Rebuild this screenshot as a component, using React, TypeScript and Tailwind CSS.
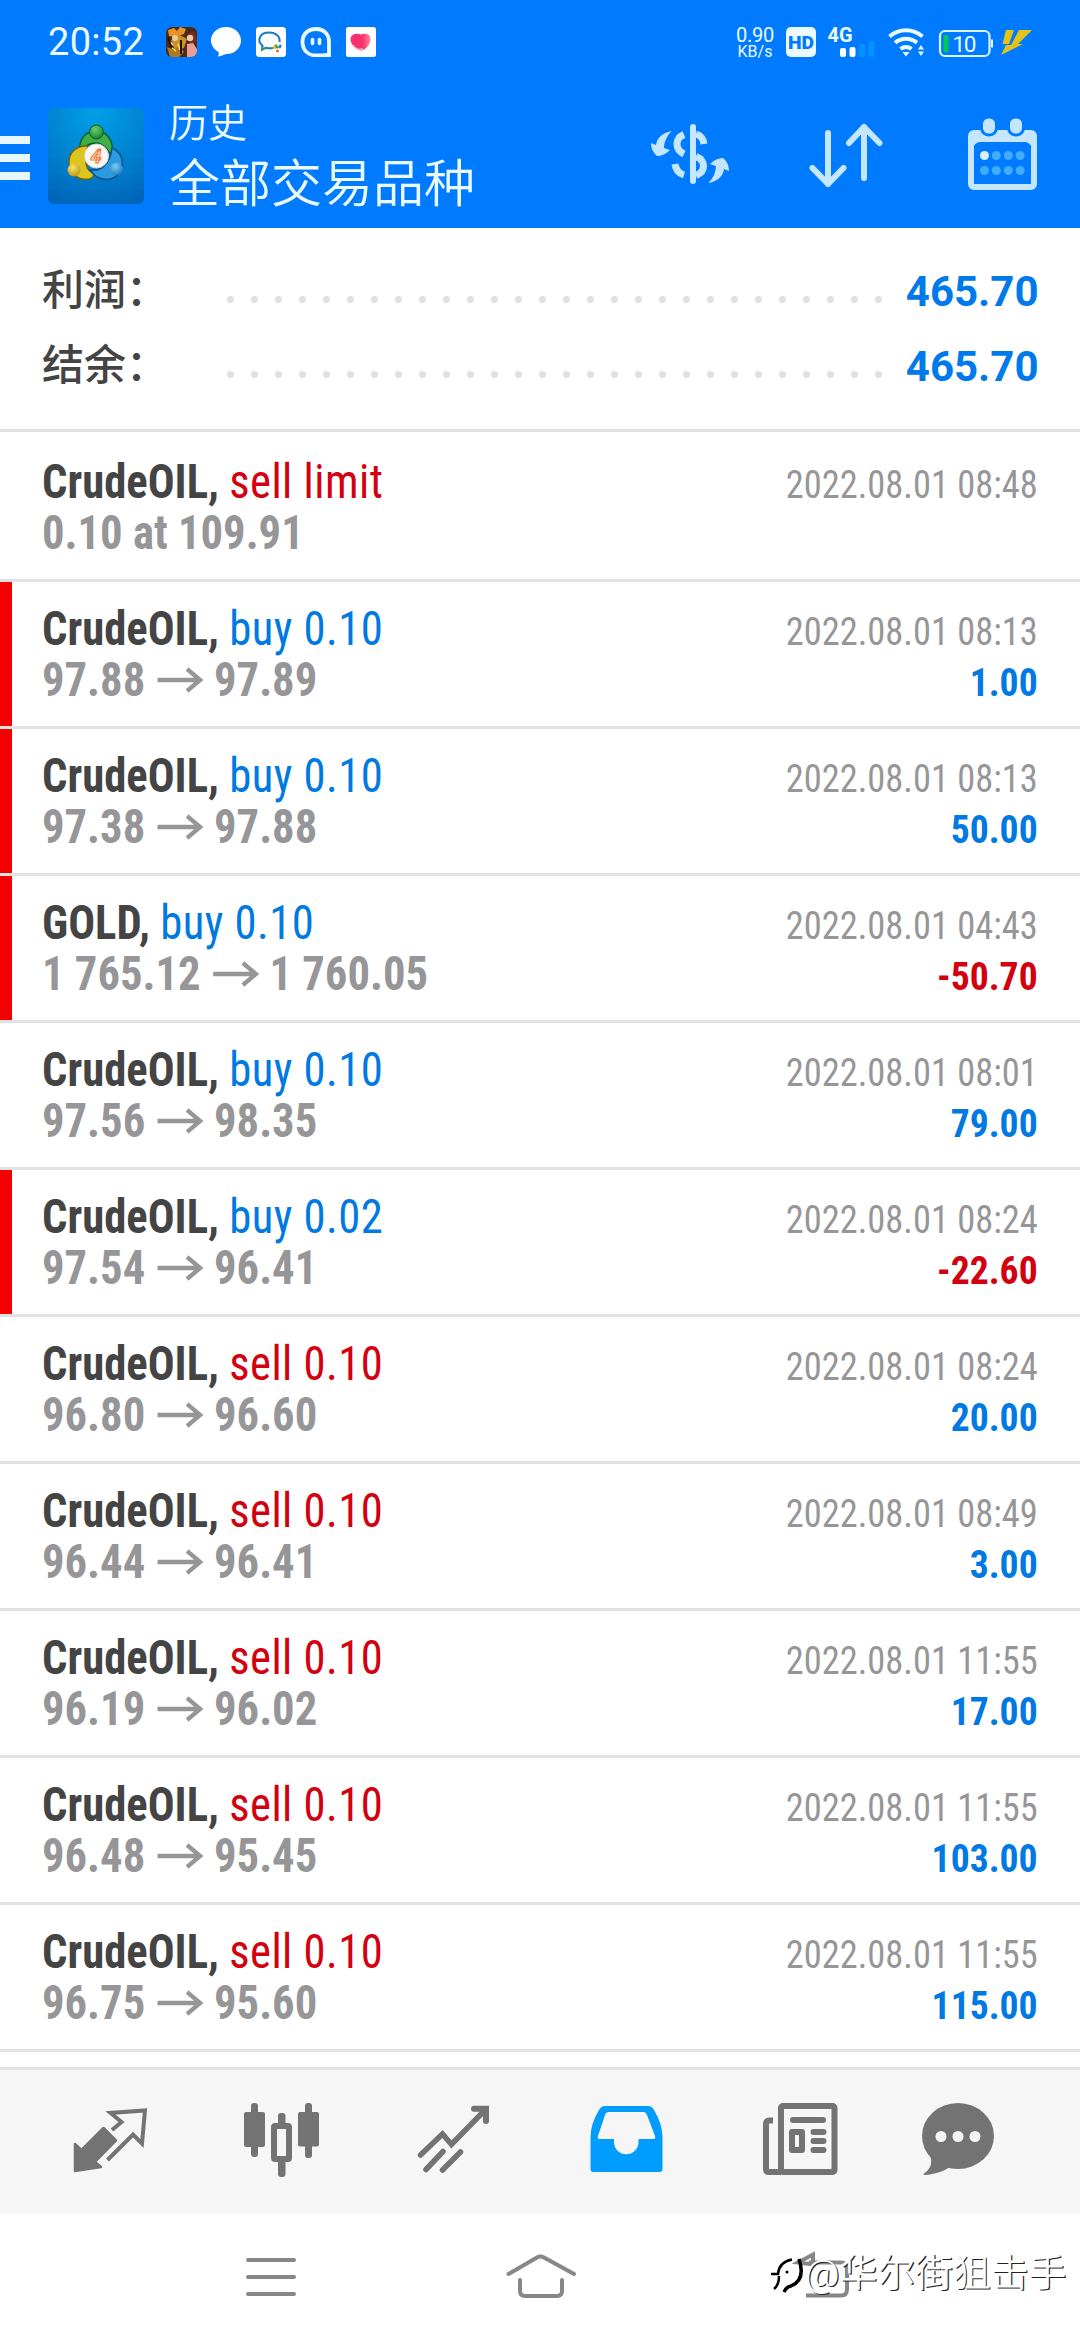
import type { ReactNode } from "react";

type Deal = {
  symbol: string;
  action: string;
  detail: [string, string?];
  time: string;
  profit?: string;
  marked?: boolean;
};

const deals: Deal[] = [
  { symbol: "CrudeOIL", action: "sell limit", detail: ["0.10 at 109.91"], time: "2022.08.01 08:48" },
  { symbol: "CrudeOIL", action: "buy 0.10", detail: ["97.88", "97.89"], time: "2022.08.01 08:13", profit: "1.00", marked: true },
  { symbol: "CrudeOIL", action: "buy 0.10", detail: ["97.38", "97.88"], time: "2022.08.01 08:13", profit: "50.00", marked: true },
  { symbol: "GOLD", action: "buy 0.10", detail: ["1 765.12", "1 760.05"], time: "2022.08.01 04:43", profit: "-50.70", marked: true },
  { symbol: "CrudeOIL", action: "buy 0.10", detail: ["97.56", "98.35"], time: "2022.08.01 08:01", profit: "79.00" },
  { symbol: "CrudeOIL", action: "buy 0.02", detail: ["97.54", "96.41"], time: "2022.08.01 08:24", profit: "-22.60", marked: true },
  { symbol: "CrudeOIL", action: "sell 0.10", detail: ["96.80", "96.60"], time: "2022.08.01 08:24", profit: "20.00" },
  { symbol: "CrudeOIL", action: "sell 0.10", detail: ["96.44", "96.41"], time: "2022.08.01 08:49", profit: "3.00" },
  { symbol: "CrudeOIL", action: "sell 0.10", detail: ["96.19", "96.02"], time: "2022.08.01 11:55", profit: "17.00" },
  { symbol: "CrudeOIL", action: "sell 0.10", detail: ["96.48", "95.45"], time: "2022.08.01 11:55", profit: "103.00" },
  { symbol: "CrudeOIL", action: "sell 0.10", detail: ["96.75", "95.60"], time: "2022.08.01 11:55", profit: "115.00" },
];

export default function App() {
  return (
    <div className="flex h-[2340px] w-[1080px] flex-col overflow-hidden bg-white font-['Roboto','Noto_Sans_CJK_SC',sans-serif]">
      <header className="h-[228px] shrink-0 bg-[#007bff] text-[#eafaff]">
        <StatusBar />
        <TitleBar />
      </header>

      <section className="h-[204px] shrink-0 border-b-3 border-[#e3e3e4] pt-[26px]">
        <SummaryRow label="利润：" value="465.70" />
        <SummaryRow label="结余：" value="465.70" />
      </section>

      <main className="h-[1635px] shrink-0">
        {deals.map((deal, index) => (
          <DealRow key={index} deal={deal} first={index === 0} />
        ))}
      </main>

      <TabBar />
      <SystemNav />
    </div>
  );
}

function StatusBar() {
  return (
    <div className="flex h-[84px] items-center pl-[48px]">
      <span className="w-[118px] text-[38px] leading-[38px] tracking-[0.3px]">20:52</span>
      <svg width="211" height="30" viewBox="166 27 211 30">
        <defs>
          <clipPath id="game"><rect x="166" y="27" width="31" height="30" rx="6" /></clipPath>
          <linearGradient id="heart" x1="0" x2="1">
            <stop offset="0" stopColor="#ff2d6f" />
            <stop offset="0.6" stopColor="#f5346a" />
            <stop offset="1" stopColor="#ff8aa0" />
          </linearGradient>
        </defs>
        <g clipPath="url(#game)">
          <rect x="166" y="27" width="31" height="30" fill="#4a2a17" />
          <path d="M168 30l6-2 3 3 3-4 6 2-2 5-9 3-6-1z" fill="#e8932a" />
          <path d="M171 40l9-5 7 4-3 9-9 3z" fill="#c7912e" />
          <path d="M187 34l7-3 3 10-6 4z" fill="#7a2a20" />
          <circle cx="175" cy="38" r="3" fill="#f0c99a" />
          <circle cx="190" cy="38" r="3.2" fill="#f4c7a8" />
          <path d="M187 44l6-1 4 6v8h-10z" fill="#e99d94" />
          <path d="M167 47l7 3 5-5 5 7-5 5h-9z" fill="#b07a22" />
          <path d="M172 48l4 3M178 44l2 6M170 42l3 3" stroke="#ffe070" strokeWidth="1.500" />
          <path d="M181 40v14M168 37l3 10" stroke="#24120c" strokeWidth="2" />
        </g>
        <path d="M226 27c8.500 0 15 6 15 13.500S234.500 54 227 54c-2 0-4.500 2-9.500 2.500 1.500-1.500 1.500-3 1-4.500-4.500-2.500-7.500-7-7.500-11.500C211 33 217.500 27 226 27z" fill="#fff" />
        <rect x="256" y="27" width="30" height="30" rx="3.500" fill="#fff" />
        <path d="M273 48c-2 .3-5 .3-7-.3l-4 2 .5-4c-6-5-3-13.200 6.500-13.200 7 0 11.500 4 10.500 9.500" fill="none" stroke="#1a78c8" strokeWidth="2" />
        <path d="M262.500 46l-.5 3.700 4-2" fill="none" stroke="#2f9e58" strokeWidth="1.800" />
        <path d="M275 45l3 3" stroke="#3aa755" strokeWidth="2.500" />
        <path d="M281 45l-2 3" stroke="#2d7cd6" strokeWidth="2.500" />
        <path d="M273 47l3 1" stroke="#f4b400" strokeWidth="2.500" />
        <path d="M278 52l-1-2" stroke="#ea4a35" strokeWidth="2.500" />
        <path d="M316 29c8 0 13 5.500 13 12.500V55h-4c-2.500.5-6 .5-9 .5-8 0-13.500-5.500-13.500-13.500S308 29 316 29z" fill="none" stroke="#eafaff" strokeWidth="3.800" />
        <path d="M312.500 39.500v4M319.500 39.500v4" stroke="#eafaff" strokeWidth="3.600" strokeLinecap="round" />
        <rect x="346" y="27" width="30" height="30" rx="2.500" fill="#fff" />
        <path d="M361 34.500c3-1.500 9-1 9.500 3.500.8 5-4.500 12.500-9.500 12.500S350 43.500 350.500 38.500c.5-4.500 6.500-6 10.500-4z" fill="url(#heart)" />
        <path d="M353 45c2 3.500 6 5 10 4" fill="none" stroke="#ffb9c8" strokeWidth="1.500" />
      </svg>

      <div className="ml-[358px] flex w-[40px] flex-col items-center">
        <span className="text-[20px] leading-[18px] tracking-[-0.3px]">0.90</span>
        <span className="text-[16px] leading-[15px]">KB/s</span>
      </div>
      <svg className="ml-[11px]" width="248" height="48" viewBox="786 18 248 48">
        <rect x="786" y="27" width="30" height="30" rx="5" fill="#eafaff" />
        <text x="788" y="49" fontSize="18" fontWeight="900" textLength="26" lengthAdjust="spacingAndGlyphs" fill="#007bff">HD</text>
        <text x="827.500" y="42" fontSize="21" fontWeight="700" textLength="25" lengthAdjust="spacingAndGlyphs" fill="#eafaff">4G</text>
        <rect x="840" y="48" width="6" height="9" rx="2" fill="#fff" />
        <rect x="849.500" y="47" width="6" height="10" rx="2" fill="#fff" />
        <rect x="859" y="44" width="6" height="13" rx="2" fill="#0592ff" />
        <rect x="868.500" y="41" width="6" height="16" rx="2" fill="#0592ff" />
        <g fill="none" stroke="#eafaff" strokeWidth="4">
          <path d="M889.500 36.500a25 25 0 0 1 33 0" />
          <path d="M895 42.800a17 17 0 0 1 22 0" />
          <path d="M900.500 49a9 9 0 0 1 11 0" />
        </g>
        <path d="M902.500 52h7l-3.500 4.500zM918 49.500l3-4.500 3 4.500zM918 51.500h6l-3 4.500z" fill="#eafaff" />
        <rect x="940" y="31" width="49.500" height="25" rx="5" fill="none" stroke="#dff3ff" strokeWidth="2.200" />
        <rect x="991" y="39.500" width="2" height="8" fill="#dff3ff" />
        <rect x="943.500" y="35" width="5" height="17" rx="1" fill="#00c853" />
        <text x="952.500" y="52" fontSize="22.500" textLength="24" fill="#eafaff">10</text>
        <path d="M1006 30h8l-5 14h-6.500zM1019 30h13l-14 14h5l-22 11 5-10h5z" fill="#e3c31a" />
      </svg>
    </div>
  );
}

function TitleBar() {
  return (
    <div className="flex h-[144px]">
      <div className="mt-[52px] flex w-[30px] flex-col gap-[10px]">
        <span className="h-2 bg-[#e6f7ff]" />
        <span className="h-2 bg-[#e6f7ff]" />
        <span className="h-2 bg-[#e6f7ff]" />
      </div>
      <AppLogo />
      <div className="ml-[25px] w-[400px]">
        <p className="mt-[20px] text-[39px] leading-[40px] font-[350]">历史</p>
        <h1 className="mt-[11px] text-[51px] leading-[60px] font-[350]">全部交易品种</h1>
      </div>
      <svg className="ml-[31px]" width="480" height="144" viewBox="600 84 480 144" fill="none" stroke="#c4e6ff">
        <g strokeWidth="7">
          <path d="M693 127v54" strokeWidth="6" strokeLinecap="round" />
          <path d="M684 134.500q-7 3-7 9.500t7 10" />
          <path d="M684 175q-8-2.500-9-11" />
          <path d="M696 134q7 2 8 10" />
          <path d="M696 156.500q7.500 3 7.500 9.500t-7.500 9.500" />
        </g>
        <g fill="#c4e6ff" stroke="none">
          <path id="curl" d="M671.500 131q-14 3-15.500 14l-5-2q0 8 6 13 7 0 13-6l-6-2q0-9 7.500-17z" />
          <use href="#curl" transform="rotate(180 690 157)" />
        </g>
        <g strokeWidth="6" strokeLinecap="round" strokeLinejoin="round">
          <path d="M828 133v51M812.500 168l15.500 16 15.500-16" />
          <path d="M864 178v-51M849 143l15-16 15.500 16" />
        </g>
        <rect x="971" y="133" width="63" height="54" rx="3" strokeWidth="6" />
        <path d="M971 136h63v9h-63z" fill="#c4e6ff" stroke="none" />
        <rect x="974" y="142" width="57" height="42" rx="6" fill="#007bff" stroke="none" />
        <rect x="981.500" y="117" width="15" height="18" rx="7" fill="#c4e6ff" stroke="#007bff" strokeWidth="3" />
        <rect x="1008.500" y="117" width="15" height="18" rx="7" fill="#c4e6ff" stroke="#007bff" strokeWidth="3" />
        <g fill="#40adff" stroke="none">
          <circle cx="984.500" cy="155.500" r="4.500" fill="#d9f1ff" />
          <circle cx="996.300" cy="155.500" r="4.500" />
          <circle cx="1008.300" cy="155.500" r="4.500" />
          <circle cx="1020.200" cy="155.500" r="4.500" />
          <circle cx="984.500" cy="170.500" r="4.500" />
          <circle cx="996.300" cy="170.500" r="4.500" />
          <circle cx="1008.300" cy="170.500" r="4.500" />
          <circle cx="1020.200" cy="170.500" r="4.500" />
        </g>
      </svg>
    </div>
  );
}

function AppLogo() {
  return (
    <svg className="mt-6 ml-[18px]" width="96" height="96" viewBox="0 0 96 96">
      <defs>
        <radialGradient id="tile" cx="0.5" cy="0.05" r="1">
          <stop offset="0" stopColor="#009fe8" />
          <stop offset="0.55" stopColor="#0082d0" />
          <stop offset="1" stopColor="#0064b8" />
        </radialGradient>
        <radialGradient id="green" cx="0.4" cy="0.3" r="0.8"><stop offset="0" stopColor="#6fd06a" /><stop offset="1" stopColor="#0c7a2c" /></radialGradient>
        <radialGradient id="gold" cx="0.4" cy="0.3" r="0.8"><stop offset="0" stopColor="#f7e36a" /><stop offset="1" stopColor="#b98f08" /></radialGradient>
        <radialGradient id="blue" cx="0.4" cy="0.3" r="0.8"><stop offset="0" stopColor="#7ccdf5" /><stop offset="1" stopColor="#0f6fb5" /></radialGradient>
      </defs>
      <rect width="96" height="96" rx="6" fill="url(#tile)" />
      <path d="M16 0v96M32 0v96M48 0v96M64 0v96M80 0v96M0 16h96M0 32h96M0 48h96M0 64h96M0 80h96" stroke="#38a8ea" strokeOpacity="0.08" />
      <path d="M32 44C30 31 38 23 48 23s19 8 16 27c-3-8-9-15-16-15s-10 3-16 9z" fill="#3fae45" stroke="#0b5c2a" strokeWidth="1.500" />
      <path d="M40 38c-13-1-20 8-19 18 1 10 10 17 20 15 4-1 6-4 4-6-7-3-9-9-5-27z" fill="#dcc51e" stroke="#6d6410" strokeWidth="1.500" />
      <path d="M64 40c10 4 12 14 9 22-4 9-14 12-24 7-3-2-5-4-7-7 10 2 20-5 22-22z" fill="#2b9be0" stroke="#0a4f8d" strokeWidth="1.500" />
      <circle cx="48.500" cy="24" r="7" fill="url(#green)" stroke="#0b5c2a" />
      <circle cx="26" cy="62" r="6.500" fill="url(#gold)" />
      <circle cx="68.500" cy="61" r="6.500" fill="url(#blue)" />
      <circle cx="48.500" cy="48" r="12" fill="#fbf7f2" stroke="#d8d2ca" />
      <text x="48" y="55" textAnchor="middle" fontSize="20" fontWeight="700" fontStyle="italic" fill="#ffe3cc" stroke="#ee7a3a" strokeWidth="1">4</text>
    </svg>
  );
}

function SummaryRow({ label, value }: { label: string; value: string }) {
  return (
    <div className="flex h-[75px] items-center pr-[41.5px] pl-[42px] text-[42px] leading-[75px]">
      <span className="-mt-[2px] w-[184.5px] font-medium text-[#444]">{label}</span>
      <span className="mt-[15px] flex gap-[17px]">
        {Array.from({ length: 28 }, (_, i) => (
          <span key={i} className="size-[7px] rounded-full bg-[#e0e0e0]" />
        ))}
      </span>
      <span className="ml-auto font-bold text-[#0079ea]">{value}</span>
    </div>
  );
}

function DealRow({ deal, first }: { deal: Deal; first: boolean }) {
  const actionColor = deal.action.startsWith("buy") ? "text-[#0079e2]" : "text-[#d3000f]";
  const profitColor = deal.profit?.startsWith("-") ? "text-[#d3000f]" : "text-[#0079e2]";
  const [open, close] = deal.detail;

  return (
    <div className="flex flex-col border-b-3 border-[#e3e3e4]">
      {first && <div className="h-[3px]" />}
      <div className={`flex h-[144px] justify-between border-l-12 pr-[42px] pl-[30px] font-['Roboto_Condensed'] ${deal.marked ? "border-[#f50000]" : "border-white"}`}>
        <div className="origin-left scale-x-[0.93] pt-[21px] text-[48px] leading-[51px] whitespace-nowrap">
          <p className={actionColor}>
            <span className="font-bold text-[#444]">{deal.symbol},</span> <span className="tracking-[0.5px]">{deal.action}</span>
          </p>
          <p className="flex font-bold text-[#969698]">
            {open}
            {close && <Arrow />}
            {close}
          </p>
        </div>
        <div className="pt-[25px] text-right text-[39px] leading-[51px] whitespace-nowrap">
          <p className="origin-right scale-x-[0.934] text-[#969698]">{deal.time}</p>
          <p className={`origin-right scale-x-[0.965] font-bold ${profitColor}`}>{deal.profit}</p>
        </div>
      </div>
    </div>
  );
}

function Arrow() {
  return (
    <svg className="mr-[11px] ml-[13px]" width="50" height="51" viewBox="0 0 50 51" fill="none" stroke="#969698" strokeWidth="4.500">
      <path d="M0 26h46M32 15l14 11-14 11" />
    </svg>
  );
}

function TabIcon({ x, width, children }: { x: number; width: number; children: ReactNode }) {
  return (
    <svg width={width} height="144" viewBox={`${x} 40 ${width} 144`} fill="none" stroke="#737373" strokeLinejoin="round">
      {children}
    </svg>
  );
}

function TabBar() {
  return (
    <nav className="flex h-[147px] shrink-0 border-t-3 border-[#e3e3e4] bg-[#f6f6f6]">
      <TabIcon x={0} width={196}>
        <path d="M75 141v-27l6.500 6L103.500 98l12.500 12.500-21 21.500 6 5z" fill="#737373" strokeWidth="2.500" />
        <path d="M112 100l9.500-8-11-9 34.500-2.500-3 33-9-9-25.500 25.500" strokeWidth="4" strokeLinejoin="miter" />
      </TabIcon>
      <TabIcon x={196} width={172}>
        <g fill="#737373" stroke="none">
          <rect x="244" y="82" width="21" height="35" rx="2" />
          <rect x="251" y="73" width="7" height="54" rx="3" />
          <rect x="278" y="83" width="7.500" height="14" rx="3" />
          <rect x="278" y="128" width="7.500" height="19" rx="3" />
          <rect x="298" y="82" width="21" height="34.500" rx="2" />
          <rect x="305" y="73" width="7" height="55" rx="3" />
        </g>
        <rect x="274" y="96" width="15" height="33" rx="1" strokeWidth="6" />
      </TabIcon>
      <TabIcon x={368} width={172}>
        <g strokeWidth="5.500" strokeLinecap="round" strokeLinejoin="miter">
          <path d="M420.500 125l22-21 9 10.500L486 79" />
          <path d="M474 78.700h12V91" strokeWidth="6" />
          <path d="M426 139.500l17-18M442.500 140l18-18" />
        </g>
      </TabIcon>
      <TabIcon x={540} width={173}>
        <path
          fillRule="evenodd"
          stroke="none"
          fill="#009dff"
          d="M605 76h43q4 0 6 4 8.500 14 8.500 27v32q0 3-3 3h-66q-3 0-3-3v-32q0-13 8.500-27 2-4 6-4zM609 82q-3 0-4 3l-7 21q-1 3 2 3h14v3a12 12 0 0 0 24.500 0v-3H653q3 0 2-3l-8-21q-1-3-4-3z"
        />
      </TabIcon>
      <TabIcon x={713} width={173}>
        <rect x="781" y="76" width="53.500" height="66" rx="2" strokeWidth="6" />
        <path d="M773 90.500h-3.500q-3.500 0-3.500 3.500V139q0 3 3 3h12" strokeWidth="6" />
        <path d="M793 90h30M813.500 102h10M813.500 111h10M813.500 120h10" strokeWidth="6" strokeLinecap="round" />
        <rect x="792" y="102" width="10" height="18" strokeWidth="6" />
      </TabIcon>
      <TabIcon x={886} width={194}>
        <ellipse cx="958" cy="106" rx="36" ry="33" fill="#737373" stroke="none" />
        <path d="M929 124q4 6 1 13-2 4-7 7.500 2 .8 7 0 12-2 19-7z" fill="#737373" stroke="none" />
        <g fill="#f6f6f6" stroke="none">
          <circle cx="941" cy="106.500" r="5.500" />
          <circle cx="958" cy="106.500" r="5.500" />
          <circle cx="975" cy="106.500" r="5.500" />
        </g>
      </TabIcon>
    </nav>
  );
}

function SystemNav() {
  return (
    <footer className="relative h-[126px] shrink-0 bg-white">
      <svg width="1080" height="126" viewBox="0 184 1080 126" fill="none" stroke="#878787" strokeWidth="4" strokeLinecap="round">
        <path d="M248 230h46M248 247h46M248 264h46" />
        <path d="M508.500 244l28.500-16.500q3.500-2 7 0L574 244M520 250v11q0 5 5 5h32q5 0 5-5v-11" />
        <path d="M798 232.500l15-8v10zM806 265.500h35q6 0 6-6v-21q0-6-6-6h-32" strokeWidth="4" strokeLinecap="butt" />
      </svg>
      {/* author signature laid over the back button */}
      <div className="absolute top-[36px] left-[768px] flex items-center text-white">
        <svg width="37" height="46" viewBox="0 0 37 46" fill="none">
          <path d="M3 24h7q1-12 14-14.500M11 26q0 9-5 13" stroke="#000" strokeWidth="2.500" />
          <path d="M31 9q7 21-8 27-5 1-7 6" stroke="#000" strokeWidth="3.500" />
          <circle cx="19" cy="22" r="1.500" fill="#000" />
        </svg>
        <span className="text-[37.8px] leading-[46px] font-[350] whitespace-nowrap [text-shadow:1.2px_1.2px_0.5px_#222]">@华尔街狙击手</span>
      </div>
    </footer>
  );
}
